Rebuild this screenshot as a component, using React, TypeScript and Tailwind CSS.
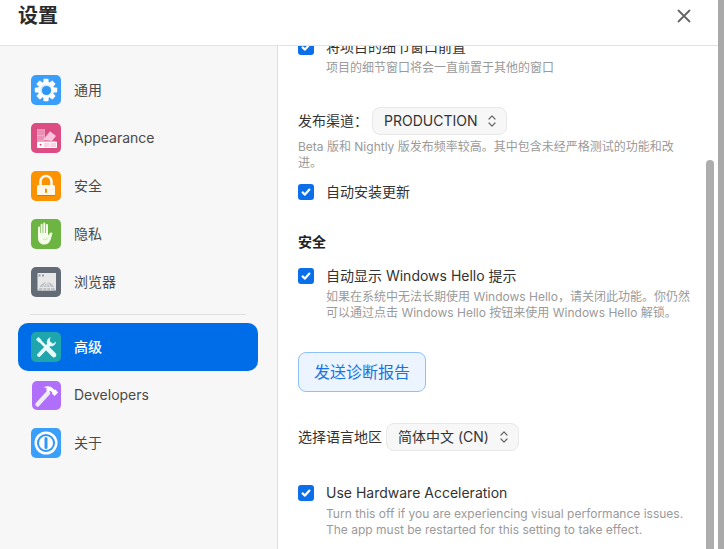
import React from "react";

const font = "font-['Inter','Noto_Sans_CJK_SC',sans-serif]";

function Check() {
  return (
    <span className="flex h-4 w-4 shrink-0 items-center justify-center rounded-[3px] bg-[#0a6fe8]">
      <svg viewBox="0 0 16 16" className="h-4 w-4" fill="none" stroke="white" strokeWidth="2.2" strokeLinecap="round" strokeLinejoin="round">
        <path d="M4.6 8.4 7 10.6 11.4 5.6" />
      </svg>
    </span>
  );
}

function Chevrons() {
  return (
    <svg viewBox="0 0 10 14" className="h-[14px] w-[10px] text-[#666]" fill="none" stroke="currentColor" strokeWidth="1.2" strokeLinecap="round" strokeLinejoin="round">
      <path d="M2 5 5 1.800 8 5" />
      <path d="M2 9 5 12.200 8 9" />
    </svg>
  );
}

function Select({ label, className }: { label: string; className: string }) {
  return (
    <div className={`flex h-[28px] items-center justify-between rounded-lg border border-[#e8e8e8] bg-[#f7f7f7] text-[14px] text-[#333] ${className}`}>
      <span className="pb-[2px]">{label}</span>
      <Chevrons />
    </div>
  );
}

function GearIcon() {
  const teeth = [0, 45, 90, 135, 180, 225, 270, 315];
  return (
    <svg viewBox="0 0 30 30" className="h-[30px] w-[30px]">
      <rect width="30" height="30" rx="5" fill="#3a9ffb" />
      {teeth.map((a) => (
        <rect key={a} x="12.4" y="3.8" width="5.2" height="5" rx="1" fill="#fff" transform={`rotate(${a} 15 15)`} />
      ))}
      <circle cx="15" cy="15" r="8.2" fill="#fff" />
      <circle cx="15" cy="15" r="5.6" fill="#cfe8ff" />
      <circle cx="15.500" cy="15.500" r="4.600" fill="#2f97f7" />
    </svg>
  );
}

function SwatchIcon() {
  return (
    <svg viewBox="0 0 30 30" className="h-[30px] w-[30px]">
      <rect width="30" height="30" rx="5" fill="#dc4d84" />
      <rect x="6.5" y="6.5" width="7" height="6" fill="#eb91b5" stroke="#f3bcd2" strokeWidth="0.6" />
      <rect x="6.5" y="12.5" width="7" height="5" fill="#eb91b5" stroke="#f3bcd2" strokeWidth="0.6" />
      <path d="M12 17 19 8.2 25 13 21 18Z" fill="#fbc4dc" />
      <rect x="6" y="18.5" width="20" height="6.5" rx="1" fill="#fff" />
      <rect x="12.8" y="19.6" width="5.6" height="4.4" fill="#fcd3e5" />
      <rect x="19.4" y="19.6" width="5.6" height="4.4" fill="#fcd3e5" />
      <circle cx="9.6" cy="21.8" r="1" fill="#dc4d84" />
    </svg>
  );
}

function LockIcon() {
  return (
    <svg viewBox="0 0 30 30" className="h-[30px] w-[30px]">
      <rect width="30" height="30" rx="5" fill="#fb9200" />
      <path d="M9.5 15V10.5a5.5 5.5 0 0 1 11 0V15" fill="none" stroke="#fff8ea" strokeWidth="2.6" />
      <rect x="6" y="14" width="18" height="11" rx="1.5" fill="#fff8ea" />
      <rect x="6" y="24" width="18" height="1" fill="#f56a00" />
      <rect x="14" y="17.5" width="2" height="4.5" rx="1" fill="#f98a00" />
    </svg>
  );
}

function HandIcon() {
  return (
    <svg viewBox="0 0 30 30" className="h-[30px] w-[30px]">
      <rect width="30" height="30" rx="5" fill="#6cb543" />
      <path
        d="M7 16V8.500a1 1 0 0 1 2 0V14h.6V5.800a1 1 0 0 1 2 0V14h.7V4.600a1 1 0 0 1 2 0V14h.7V6a1 1 0 0 1 2 0v10.600l2-2.600c1-1.200 3-.4 2.300 1.100L19.500 21c-1.300 3-3.200 4.600-6.200 4.600-3.600 0-6.300-2.600-6.300-6.600Z"
        fill="#f6fdea"
      />
      <path d="M12 20c2 1.400 4 .6 5-1.400" fill="none" stroke="#c9e7a6" strokeWidth="1" />
    </svg>
  );
}

function BrowserIcon() {
  return (
    <svg viewBox="0 0 30 30" className="h-[30px] w-[30px]">
      <rect width="30" height="30" rx="5" fill="#636b76" />
      <rect x="6.500" y="6" width="18.500" height="17.500" fill="#e7e7e7" />
      <rect x="7.500" y="7.500" width="2" height="2" fill="#9a9fa6" />
      <rect x="11" y="7.500" width="2" height="2" fill="#9a9fa6" />
      <path d="M7.500 23.500a8.300 8.300 0 0 1 16.600 0Z" fill="#bfc2c6" />
      <path d="M7.500 20.500h16.600M15.800 15.200v8.300M11.800 23.500c0-3.500 1.500-6.500 4-8.300 2.500 1.800 4 4.800 4 8.300" fill="none" stroke="#eee" strokeWidth="0.8" />
    </svg>
  );
}

function ToolsIcon() {
  return (
    <svg viewBox="0 0 30 30" className="h-[30px] w-[30px]">
      <rect width="30" height="30" rx="5" fill="#1fa6ad" />
      <path d="M8 8 15 15" stroke="#e8fbfb" strokeWidth="2.600" />
      <path d="M5 7.500 7.500 5 10.500 8 8 10.500Z" fill="#e8fbfb" />
      <path d="M16 16 23 23" stroke="#e8fbfb" strokeWidth="4.600" strokeLinecap="round" />
      <path d="M8 23 19 11.500" stroke="#e8fbfb" strokeWidth="3.800" strokeLinecap="round" />
      <path d="M20 5.200a5 5 0 0 0-3.800 6.800l2 2a5 5 0 0 0 6.800-4.500l-3 2.200-3-1.700-.2-3.200Z" fill="#e8fbfb" />
    </svg>
  );
}

function HammerIcon() {
  return (
    <svg viewBox="0 0 30 30" className="h-[30px] w-[30px]">
      <rect x="1" y="1" width="29" height="29" rx="5" fill="#b06ffb" />
      <path d="M6.500 24.500 17 13" stroke="#eeeef2" strokeWidth="4.400" strokeLinecap="round" />
      <path d="M12.500 7.500c3.500-2 7-1.500 9.500 1l1.500 1.500 1-.5 2.500 3-3.500 3.500-2.500-2.500.3-1.200-2.300-1.500-2 1.500-2-2.500 1-1.500c-1-.5-2-.5-3.500-.8Z" fill="#fff" />
    </svg>
  );
}

function AboutIcon() {
  return (
    <svg viewBox="0 0 30 30" className="h-[30px] w-[30px]">
      <rect width="30" height="30" rx="5" fill="#3a9ffb" />
      <circle cx="15" cy="15" r="11.500" fill="#fff" />
      <circle cx="15" cy="15" r="9" fill="#2f97f7" />
      <circle cx="15" cy="15" r="7" fill="#fff" />
      <rect x="13.500" y="9" width="3" height="12" rx="1.500" fill="#2f97f7" />
    </svg>
  );
}

function NavItem({ icon, label, active, bold }: { icon: React.ReactNode; label: string; active?: boolean; bold?: boolean }) {
  return (
    <div className={`flex h-[48px] items-center gap-[13px] rounded-[10px] pl-[13px] text-[14px] ${active ? "bg-[#006de8] text-white" : "text-[#4a4a4a]"} ${bold ? "font-medium" : ""}`}>
      {icon}
      <span className="pb-[2px]">{label}</span>
    </div>
  );
}

function Desc({ children }: { children: React.ReactNode }) {
  return <p className="text-[12px] leading-[16px] text-[#9a9a9a]">{children}</p>;
}

function CheckRow({ label, children }: { label: string; children?: React.ReactNode }) {
  return (
    <div className="flex gap-3">
      <div className="pt-[1px]">
        <Check />
      </div>
      <div>
        <div className="text-[14px] leading-[18px] text-[#333]">{label}</div>
        {children && <div className="mt-[4px]">{children}</div>}
      </div>
    </div>
  );
}

export default function App() {
  return (
    <div className={`flex h-[549px] w-[724px] overflow-hidden bg-white ${font}`}>
      <div className="flex min-w-0 flex-1 flex-col">
        <header className="flex h-[46px] shrink-0 items-start justify-between border-b border-[#e3e3e3] pl-[18px] pr-[27px]">
          <h1 className="text-[20px] font-semibold leading-[32px] text-[#2b2b2b]">设置</h1>
          <svg viewBox="0 0 14 14" className="mt-[9px] h-[14px] w-[14px] text-[#666]" fill="none" stroke="currentColor" strokeWidth="1.800" strokeLinecap="round">
            <path d="M1.500 1.500 12.500 12.500M12.500 1.500 1.500 12.500" />
          </svg>
        </header>
        <div className="flex min-h-0 flex-1">
          <aside className="w-[278px] shrink-0 border-r border-[#dcdcdc] bg-[#f7f7f7] pl-[18px] pr-[19px] pt-[20px]">
            <NavItem icon={<GearIcon />} label="通用" />
            <NavItem icon={<SwatchIcon />} label="Appearance" />
            <NavItem icon={<LockIcon />} label="安全" />
            <NavItem icon={<HandIcon />} label="隐私" />
            <NavItem icon={<BrowserIcon />} label="浏览器" />
            <div className="mx-[12px] my-[8px] border-t border-[#e0e0e0]" />
            <NavItem icon={<ToolsIcon />} label="高级" active bold />
            <NavItem icon={<HammerIcon />} label="Developers" />
            <NavItem icon={<AboutIcon />} label="关于" />
          </aside>
          <main className="relative min-w-0 flex-1 overflow-hidden">
            <div className="-mt-[8px] pl-[20px] pr-[24px]">
              <CheckRow label="将项目的细节窗口前置">
                <Desc>项目的细节窗口将会一直前置于其他的窗口</Desc>
              </CheckRow>
              <div className="mt-[31px] flex items-center gap-[4px] text-[14px] text-[#333]">
                <span className="pb-[2px]">发布渠道：</span>
                <Select label="PRODUCTION" className="w-[135px] pl-[11px] pr-[9px]" />
              </div>
              <div className="mt-[4px]">
                <Desc>Beta 版和 Nightly 版发布频率较高。其中包含未经严格测试的功能和改进。</Desc>
              </div>
              <div className="mt-[12px]">
                <CheckRow label="自动安装更新" />
              </div>
              <h2 className="mt-[32px] text-[14px] font-semibold leading-[18px] text-[#222]">安全</h2>
              <div className="mt-[16px]">
                <CheckRow label="自动显示 Windows Hello 提示">
                  <Desc>如果在系统中无法长期使用 Windows Hello，请关闭此功能。你仍然可以通过点击 Windows Hello 按钮来使用 Windows Hello 解锁。</Desc>
                </CheckRow>
              </div>
              <button className="mt-[31px] flex h-[40px] w-[128px] items-center justify-center rounded-lg border border-[#8ec0fb] bg-[#ebf4ff] text-[16px] text-[#1a73e0]">
                发送诊断报告
              </button>
              <div className="mt-[31px] flex items-center gap-[4px] text-[14px] text-[#333]">
                <span className="pb-[2px]">选择语言地区</span>
                <Select label="简体中文 (CN)" className="w-[133px] pl-[11px] pr-[9px]" />
              </div>
              <div className="mt-[33px]">
                <CheckRow label="Use Hardware Acceleration">
                  <Desc>Turn this off if you are experiencing visual performance issues. The app must be restarted for this setting to take effect.</Desc>
                </CheckRow>
              </div>
            </div>
            <div className="absolute left-[428px] top-[114px] h-[400px] w-[8px] rounded-t-[4px] bg-[#adadad]" />
          </main>
        </div>
      </div>
      <div className="w-[6px] shrink-0 bg-[#a9a9a9]" />
    </div>
  );
}
